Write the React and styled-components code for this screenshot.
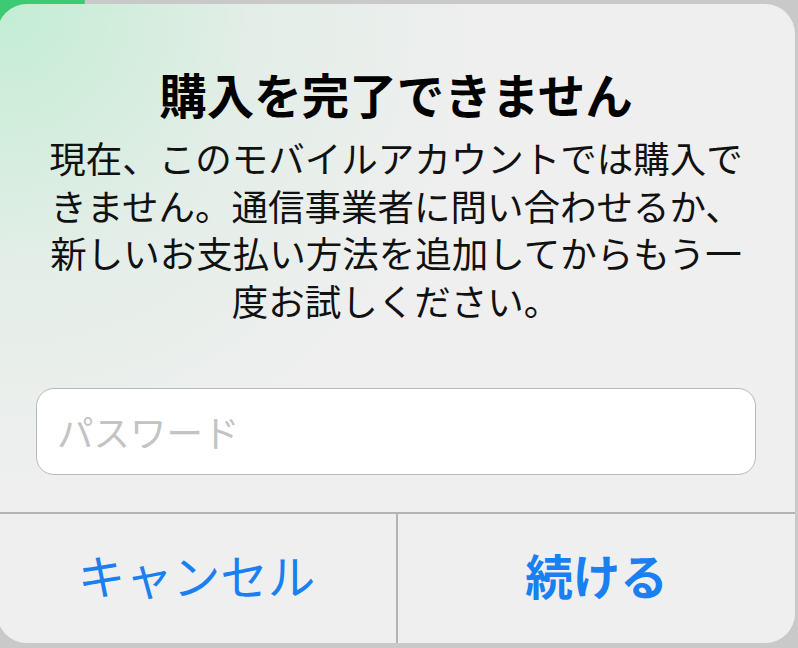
import React from 'react';
import styled, { createGlobalStyle } from 'styled-components';

const GlobalStyle = createGlobalStyle`
  html, body {
    margin: 0;
    padding: 0;
    background: #c8c8c8;
    overflow: hidden;
  }
  body {
    font-family: "Noto Sans CJK JP", "Noto Sans", sans-serif;
  }
`;

const Screen = styled.div`
  position: relative;
  width: 798px;
  height: 648px;
  overflow: hidden;
  background: #c9c9c9;
  padding-top: 4px;
  box-sizing: border-box;
`;

// app icon peeking out behind the alert
const GreenBlob = styled.div`
  position: absolute;
  top: -60px;
  left: -40px;
  width: 125px;
  height: 90px;
  border-radius: 30px;
  background: #3ccb72;
`;

const Alert = styled.div`
  position: relative;
  margin-left: -3px;
  width: 798px;
  height: 639px;
  border-radius: 30px;
  overflow: hidden;
  display: flex;
  flex-direction: column;
  background:
    radial-gradient(circle at 0% 0%, rgba(165, 235, 192, 0.6) 0px, rgba(200, 235, 215, 0.28) 270px, rgba(240, 240, 240, 0) 500px),
    #efefef;
`;

const Content = styled.div`
  display: flex;
  flex-direction: column;
  align-items: center;
  padding: 62px 0 37px;
  border-bottom: 2px solid #b4b4b4;
`;

const Title = styled.h1`
  margin: 0;
  font-size: 47.5px;
  line-height: 56px;
  font-weight: 700;
  color: #000;
`;

const Message = styled.p`
  margin: 12px 0 0;
  font-size: 36.5px;
  line-height: 47.5px;
  font-weight: 400;
  color: #111;
  text-align: center;
  white-space: nowrap;
`;

const PasswordField = styled.input`
  margin-top: 64px;
  width: 720px;
  height: 87px;
  box-sizing: border-box;
  padding: 0 20px;
  border: 1.5px solid #b9b9b9;
  border-radius: 18px;
  background: #fff;
  font-family: inherit;
  font-size: 36.5px;
  color: #111;
  outline: none;
  &::placeholder {
    color: #c3c3c3;
  }
`;

const Actions = styled.div`
  flex: 1;
  display: grid;
  grid-template-columns: 399px 1fr;
  background: rgba(238, 238, 240, 0.6);
`;

const ActionButton = styled.button`
  border: none;
  background: transparent;
  font-family: inherit;
  font-size: 47.5px;
  font-weight: ${(p) => (p.$primary ? 700 : 400)};
  color: #1a7ff0;
  padding: 0 0 8px;
  & + & {
    border-left: 2px solid #b4b4b4;
  }
`;

export default function App() {
  return (
    <>
      <GlobalStyle />
      <Screen>
        <GreenBlob />
        <Alert>
          <Content>
            <Title>購入を完了できません</Title>
            <Message>
              現在、このモバイルアカウントでは購入で
              <br />
              きません。通信事業者に問い合わせるか、
              <br />
              新しいお支払い方法を追加してからもう一
              <br />
              度お試しください。
            </Message>
            <PasswordField type="password" placeholder="パスワード" />
          </Content>
          <Actions>
            <ActionButton>キャンセル</ActionButton>
            <ActionButton $primary>続ける</ActionButton>
          </Actions>
        </Alert>
      </Screen>
    </>
  );
}
